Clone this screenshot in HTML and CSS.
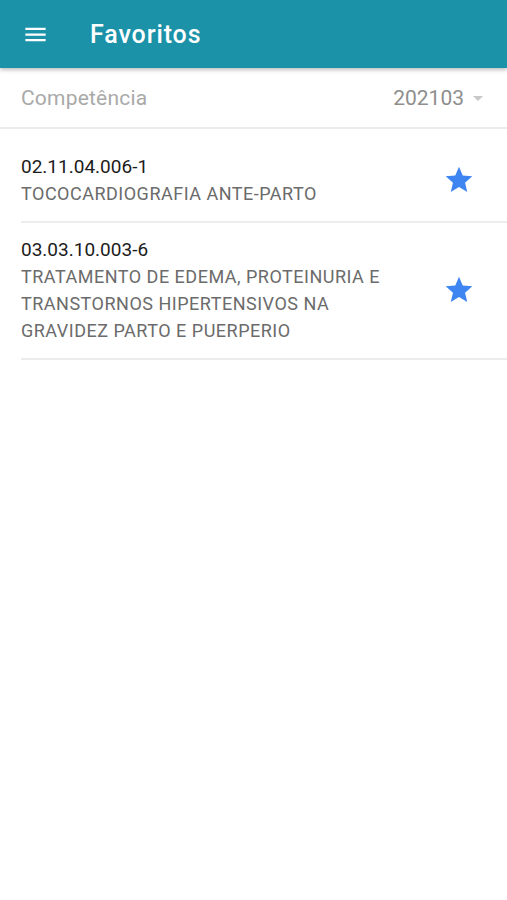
FILE: index.html
```html
<!DOCTYPE html>
<html lang="pt">
<head>
    <meta charset="UTF-8">
    <meta name="viewport" content="width=device-width, initial-scale=1.0">
    <title>Favoritos</title>
    <link rel="stylesheet" href="styles.css">
</head>
<body>
    <header class="toolbar">
        <svg class="menu-icon" width="24" height="24" viewBox="0 0 24 24">
            <path d="M3 6h18v2H3zM3 11h18v2H3zM3 16h18v2H3z" fill="#fff"/>
        </svg>
        <h1>Favoritos</h1>
    </header>

    <div class="filter">
        <span class="filter-label">Competência</span>
        <span class="filter-value">202103 <span class="caret"></span></span>
    </div>

    <ul class="list">
        <li class="item">
            <div class="item-text">
                <p class="code">02.11.04.006-1</p>
                <p class="desc">TOCOCARDIOGRAFIA ANTE-PARTO</p>
            </div>
            <svg class="star" width="32" height="32" viewBox="0 0 24 24">
                <path d="M12 17.27L18.18 21l-1.64-7.03L22 9.24l-7.19-.61L12 2 9.19 8.63 2 9.24l5.46 4.73L5.82 21z" fill="#3f85f2"/>
            </svg>
        </li>
        <li class="item">
            <div class="item-text">
                <p class="code">03.03.10.003-6</p>
                <p class="desc">TRATAMENTO DE EDEMA, PROTEINURIA E TRANSTORNOS HIPERTENSIVOS NA GRAVIDEZ PARTO E PUERPERIO</p>
            </div>
            <svg class="star" width="32" height="32" viewBox="0 0 24 24">
                <path d="M12 17.27L18.18 21l-1.64-7.03L22 9.24l-7.19-.61L12 2 9.19 8.63 2 9.24l5.46 4.73L5.82 21z" fill="#3f85f2"/>
            </svg>
        </li>
    </ul>
</body>
</html>
```

FILE: styles.css
```css
/* reset */
* {
    margin: 0;
    padding: 0;
    box-sizing: border-box;
}

body {
    font-family: Roboto, "Liberation Sans", sans-serif;
    background: #fff;
    width: 507px;
    height: 900px;
}

.toolbar {
    height: 68px;
    background-color: #1b92a8;
    display: flex;
    align-items: center;
    padding-left: 22px;
    box-shadow: 0 2px 4px rgba(0, 0, 0, 0.25);
}

.menu-icon {
    width: 27px;
    height: 27px;
}

.toolbar h1 {
    color: #fff;
    font-size: 25px;
    font-weight: 500;
    margin-left: 41px;
    letter-spacing: 0.9px;
}

.filter {
    height: 60px;
    display: flex;
    align-items: center;
    justify-content: space-between;
    padding: 0 24px 0 21px;
    border-bottom: 2px solid #ececec;
    margin-top: 1px;
}

.filter-label {
    color: #a9a9a9;
    font-size: 21px;
    letter-spacing: 0.2px;
}

.filter-value {
    color: #8e8e8e;
    font-size: 21px;
    display: flex;
    align-items: center;
}

.caret {
    width: 0;
    height: 0;
    border-left: 5px solid transparent;
    border-right: 5px solid transparent;
    border-top: 5px solid #c8c8c8;
    margin-left: 9px;
}

.list {
    list-style: none;
    padding-top: 11px;
    margin-left: 21px;
}

.item {
    display: flex;
    align-items: center;
    padding: 13px 0 14px;
    border-bottom: 2px solid #ececec;
}

.item-text {
    flex: 1;
    padding-right: 30px;
}

.code {
    color: #1c1c1c;
    font-size: 19px;
    line-height: 27px;
}

.desc {
    color: #6b6b6b;
    font-size: 18px;
    line-height: 27px;
    letter-spacing: 0.5px;
}

.star {
    margin-right: 32px;
    flex-shrink: 0;
}
```
